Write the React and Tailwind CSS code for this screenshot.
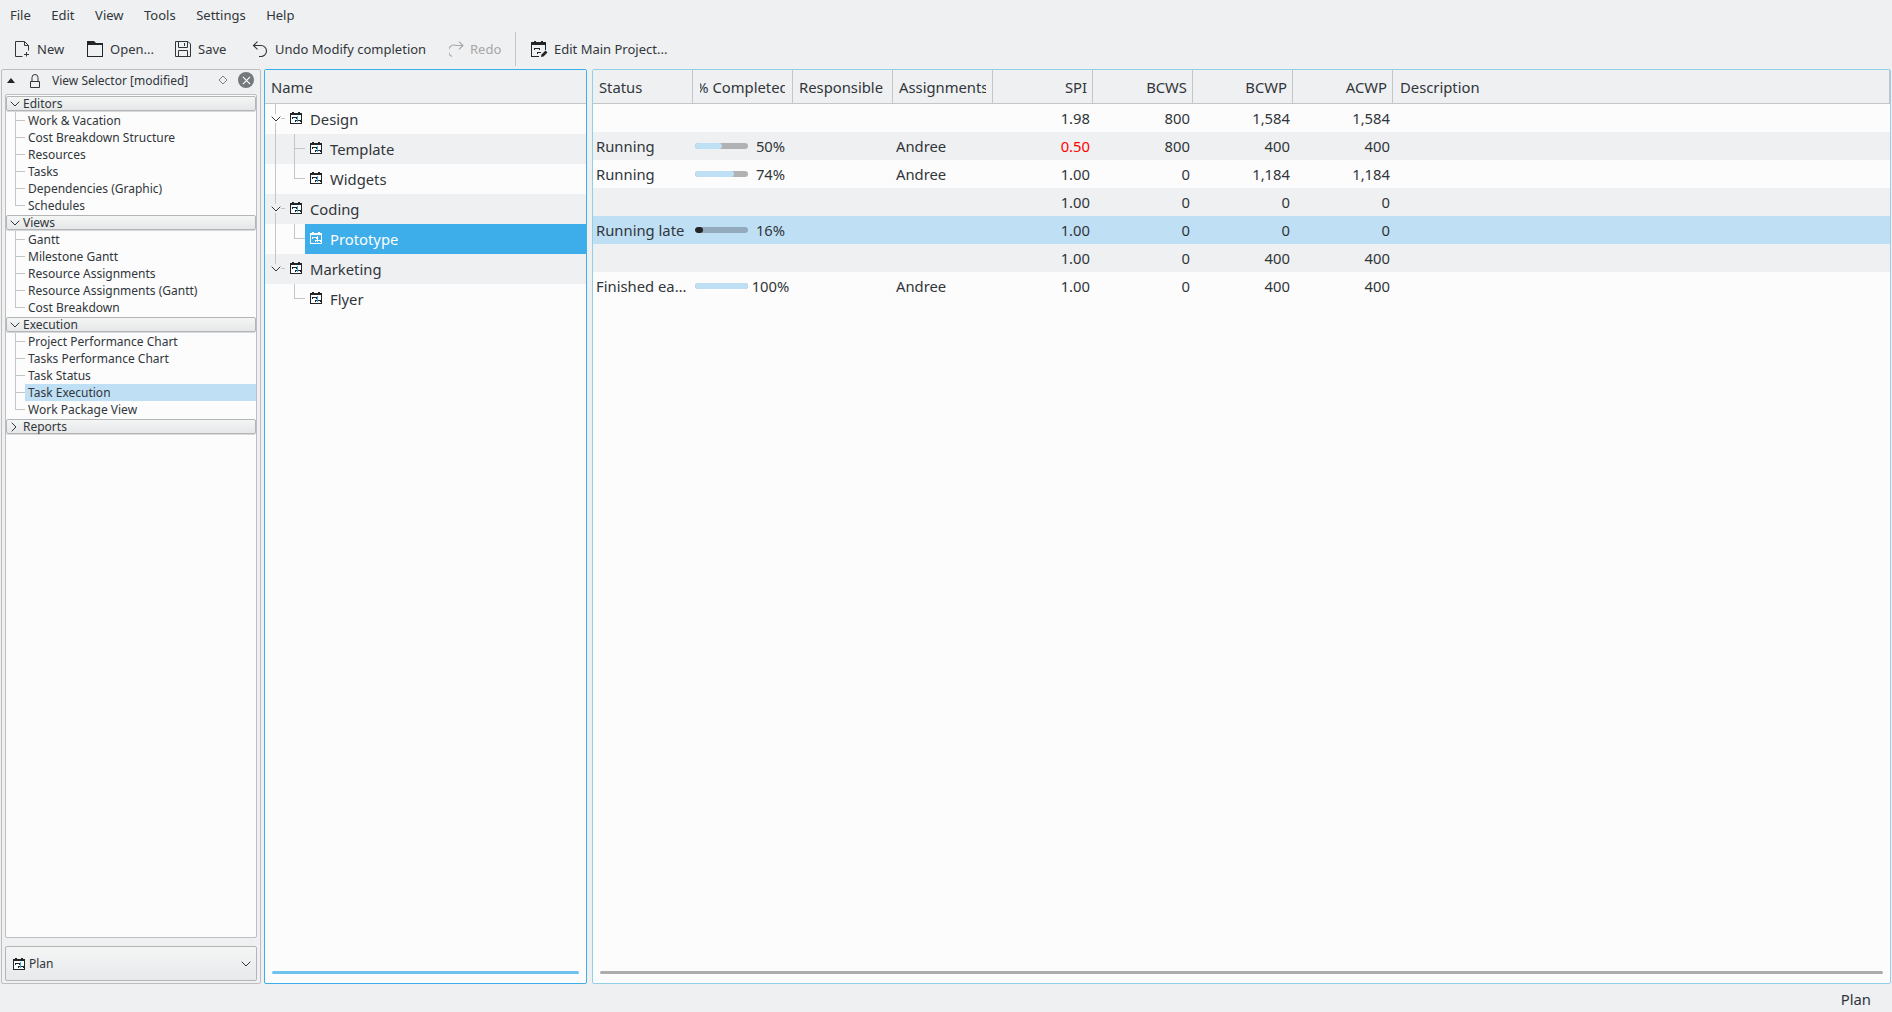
import React from "react";

const Chevron = ({ dir = "down", className = "" }) =>
  dir === "down" ? (
    <svg viewBox="0 0 10 6" className={className} fill="none" stroke="currentColor" strokeWidth="1">
      <path d="M0.7 0.7 L5 5 L9.3 0.7" />
    </svg>
  ) : (
    <svg viewBox="0 0 6 10" className={className} fill="none" stroke="currentColor" strokeWidth="1">
      <path d="M0.7 0.7 L5 5 L0.7 9.3" />
    </svg>
  );

const PlanIcon = ({ light = false, className = "" }) => {
  const c = light ? "#fcfcfc" : "#232629";
  return (
    <svg viewBox="0 0 12 12" className={className} fill="none" shapeRendering="crispEdges">
      <path d="M2 0h2v2H2zM8 0h2v2H8zM0 1h12v2H0z" fill={c} />
      <rect x="0.5" y="1.5" width="11" height="10" stroke={c} />
      {!light && <rect x="1" y="3" width="10" height="8" fill="#fcfcfc" />}
      <path d="M2 5.5h4M2 4.5v2M6 4.5v2M5 8.5h5M5 7.5v2M10 7.5v2" stroke={c} />
      <path d="M7.5 4v6" stroke={light ? "#fcfcfc" : "#3daee9"} />
    </svg>
  );
};

const ToolBtn = ({ w, icon, label, disabled, labelClass = "" }) => (
  <div className={`flex items-center gap-[4px] shrink-0 ${w} ${disabled ? "text-[#a5a7a9]" : "text-[#31363b]"}`}>
    <span className="w-[22px] h-[22px] flex items-center justify-center shrink-0">{icon}</span>
    <span className={`pt-[2px] ${labelClass}`}>{label}</span>
  </div>
);

const NewIcon = (
  <svg viewBox="0 0 16 16" className="w-[16px] h-[16px]" fill="none" stroke="#31363b" strokeWidth="1">
    <path d="M8.5 15.5 H1.5 V0.5 H10.5 L14.5 4.5 V9.5 M10.5 0.5 V4.5 H14.5" />
    <path d="M12.5 11 V15.5 M10 13.5 H15" />
  </svg>
);
const OpenIcon = (
  <svg viewBox="0 0 16 16" className="w-[16px] h-[16px]">
    <path d="M0 0 H7 L9 2 H16 V16 H0 Z" fill="#232629" />
    <rect x="1" y="4" width="14" height="11" fill="#eff0f1" />
  </svg>
);
const SaveIcon = (
  <svg viewBox="0 0 16 16" className="w-[16px] h-[16px]" fill="none" stroke="#31363b" strokeWidth="1">
    <path d="M0.5 0.5 H13 L15.5 3 V15.5 H0.5 Z" />
    <path d="M3.5 0.5 V6.5 H12.5 V0.5 M3.5 15.5 V9.5 H12.5 V15.5" />
    <path d="M9.5 2 V5" />
  </svg>
);
const UndoIcon = (
  <svg viewBox="0 0 16 16" className="w-[16px] h-[16px]" fill="none" stroke="#31363b" strokeWidth="1.1">
    <path d="M1.5 4.5 H9 A5.5 5.5 0 0 1 9 15.5 H7" />
    <path d="M5.5 0.7 L1.5 4.5 L5.5 8.3" />
  </svg>
);
const RedoIcon = (
  <svg viewBox="0 0 16 16" className="w-[16px] h-[16px]" fill="none" stroke="#a5a7a9" strokeWidth="1.1">
    <path d="M14 4.5 H8 A5.8 5.8 0 0 0 3 15.5" />
    <path d="M10 0.7 L14 4.5 L10 8.3" />
  </svg>
);
const EditIcon = (
  <svg viewBox="0 0 17 17" className="w-[17px] h-[17px]" fill="none" shapeRendering="crispEdges">
    <path d="M3 0h2v2H3zM10 0h2v2h-2zM0 1h15v3H0z" fill="#232629" />
    <path d="M8 15.5H0.5V1.5H14.5V9" stroke="#232629" />
    <path d="M3 7.5h5M3 6.5v2M8 6.5v2M6 11.5h4M6 10.5v2" stroke="#232629" />
    <path d="M10 16 L10.5 13.5 L14.5 9.5 L16.5 11.5 L12.5 15.5 Z" fill="#232629" shapeRendering="auto" />
  </svg>
);

const sections = [
  { t: "Editors", open: true, items: ["Work & Vacation", "Cost Breakdown Structure", "Resources", "Tasks", "Dependencies (Graphic)", "Schedules"] },
  { t: "Views", open: true, items: ["Gantt", "Milestone Gantt", "Resource Assignments", "Resource Assignments (Gantt)", "Cost Breakdown"] },
  { t: "Execution", open: true, items: ["Project Performance Chart", "Tasks Performance Chart", "Task Status", "Task Execution", "Work Package View"] },
  { t: "Reports", open: false, items: [] },
];

function SelectorTree() {
  return (
    <div className="flex-1 bg-[#fcfcfc] border border-[#bcbebf] rounded-[2px] text-[12px] leading-[17px] text-[#31363b]">
      {sections.map((s) => (
        <div key={s.t}>
          <div className="h-[15px] my-[1px] flex items-center border border-[#b4b5b6] rounded-[2px] bg-gradient-to-b from-[#f4f5f5] to-[#e6e7e8] shadow-[0_1px_0_#d8d9da]">
            <span className="w-[16px] pl-[3px] flex text-[#31363b] shrink-0">
              {s.open ? (
                <Chevron className="w-[10px] h-[6px]" />
              ) : (
                <Chevron dir="right" className="ml-[1px] w-[6px] h-[10px]" />
              )}
            </span>
            <span>{s.t}</span>
          </div>
          {s.items.map((it, i) => {
            const last = i === s.items.length - 1;
            const sel = it === "Task Execution";
            return (
              <div key={it} className="flex h-[17px] items-center">
                <span className="relative w-[10px] h-[17px] ml-[9px] shrink-0">
                  <span className={`absolute left-0 top-0 w-px bg-[#c4c5c6] ${last ? "h-[9px]" : "h-[17px]"}`} />
                  <span className="absolute left-0 top-[8px] w-[10px] h-px bg-[#c4c5c6]" />
                </span>
                <span className={`flex-1 h-[17px] pl-[3px] ${sel ? "bg-[#bfdff5]" : ""}`}>{it}</span>
              </div>
            );
          })}
        </div>
      ))}
    </div>
  );
}

const treeRows = [
  { t: "Design", top: true, bg: "bg-[#fcfcfc]", through: true },
  { t: "Template", bg: "bg-[#eff0f1]", through: true, more: true },
  { t: "Widgets", bg: "bg-[#fcfcfc]", through: true },
  { t: "Coding", top: true, bg: "bg-[#eff0f1]", through: true },
  { t: "Prototype", bg: "bg-[#fcfcfc]", through: true, sel: true },
  { t: "Marketing", top: true, bg: "bg-[#eff0f1]", through: false },
  { t: "Flyer", bg: "bg-[#fcfcfc]", through: false },
];

function TreeRow({ r }) {
  return (
    <div className={`relative h-[30px] flex items-center text-[14.8px] text-[#31363b] ${r.bg}`}>
      {r.top ? (
        <>
          <span className={`absolute left-[10px] top-0 w-px bg-[#c4c5c6] ${r.through ? "h-[30px]" : "h-[10px]"}`} />
          <span className="absolute left-[15px] top-[14px] w-[5px] h-px bg-[#c4c5c6]" />
          <span className={`absolute left-[5px] top-[10px] w-[11px] h-[9px] flex items-center justify-center ${r.bg}`}>
            <Chevron className="w-[10px] h-[6px] text-[#31363b]" />
          </span>
          <PlanIcon className="ml-[25px] w-[12px] h-[12px] shrink-0 -mt-[2px]" />
          <span className="ml-[8px]">{r.t}</span>
        </>
      ) : (
        <>
          {r.through && <span className="absolute left-[10px] top-0 w-px h-[30px] bg-[#c4c5c6]" />}
          <span className={`absolute left-[29px] top-0 w-px bg-[#c4c5c6] ${r.more ? "h-[30px]" : "h-[15px]"}`} />
          <span className="absolute left-[29px] top-[14px] w-[11px] h-px bg-[#c4c5c6]" />
          <div className={`ml-[40px] flex-1 h-[30px] flex items-center ${r.sel ? "bg-[#3daee9] text-[#fcfcfc]" : ""}`}>
            <PlanIcon light={r.sel} className="ml-[5px] w-[12px] h-[12px] shrink-0 -mt-[2px]" />
            <span className="ml-[8px]">{r.t}</span>
          </div>
        </>
      )}
    </div>
  );
}

const cols = ["SPI", "BCWS", "BCWP", "ACWP"];
const rows = [
  { spi: "1.98", bcws: "800", bcwp: "1,584", acwp: "1,584" },
  { status: "Running", pct: 50, who: "Andree", spi: "0.50", red: true, bcws: "800", bcwp: "400", acwp: "400" },
  { status: "Running", pct: 74, who: "Andree", spi: "1.00", bcws: "0", bcwp: "1,184", acwp: "1,184" },
  { spi: "1.00", bcws: "0", bcwp: "0", acwp: "0" },
  { status: "Running late", pct: 16, spi: "1.00", bcws: "0", bcwp: "0", acwp: "0", sel: true },
  { spi: "1.00", bcws: "0", bcwp: "400", acwp: "400" },
  { status: "Finished ea…", pct: 100, who: "Andree", spi: "1.00", bcws: "0", bcwp: "400", acwp: "400" },
];

function Progress({ pct, sel }) {
  return (
    <div className="w-[100px] shrink-0 flex items-center h-full">
      <div className={`ml-[2px] w-[53px] h-[6px] rounded-[3px] overflow-hidden -mt-[1px] shrink-0 ${sel ? "bg-[#93a9bc]" : "bg-[#b1b2b3]"}`}>
        <div className={`h-full rounded-[3px] ${sel ? "bg-[#232629]" : "bg-[#bfdff5]"}`} style={{ width: `${pct}%` }} />
      </div>
      <span className="w-[46px] text-center whitespace-nowrap">{pct}%</span>
    </div>
  );
}

const Head = ({ children, className = "" }) => (
  <div className={`w-[100px] shrink-0 h-full border-r border-[#c5c6c7] pt-[1px] flex items-center overflow-hidden ${className}`}>
    {children}
  </div>
);

function Table() {
  return (
    <div className="flex-1 min-w-0 flex flex-col bg-[#fcfcfc] border border-[#94cfea] rounded-[2px]">
      <div className="h-[34px] shrink-0 flex bg-[#eff0f1] border-b border-[#c5c6c7] text-[14.8px] text-[#31363b]">
        <Head className="pl-[6px]">Status</Head>
        <Head className="justify-center whitespace-nowrap">
          <div className="w-[85px] overflow-hidden flex justify-center">
            <span className="shrink-0">% Completed</span>
          </div>
        </Head>
        <Head className="pl-[6px] whitespace-nowrap">Responsible</Head>
        <Head className="pl-[6px] whitespace-nowrap"><span className="block w-[87px] shrink-0 overflow-hidden">Assignments</span></Head>
        {cols.map((c) => (
          <Head key={c} className="justify-end pr-[5px]">{c}</Head>
        ))}
        <div className="flex-1 pl-[7px] pt-[1px] flex items-center border-r border-[#c5c6c7]">Description</div>
      </div>
      <div className="flex-1 text-[14.8px] text-[#31363b]">
        {rows.map((r, i) => (
          <div key={i} className={`h-[28px] flex items-center ${r.sel ? "bg-[#bfdff5]" : i % 2 ? "bg-[#eff0f1]" : "bg-[#fcfcfc]"}`}>
            <div className="w-[100px] shrink-0 pl-[3px] whitespace-nowrap">{r.status}</div>
            {r.pct ? <Progress pct={r.pct} sel={r.sel} /> : <div className="w-[100px] shrink-0" />}
            <div className="w-[100px] shrink-0" />
            <div className="w-[100px] shrink-0 pl-[3px]">{r.who}</div>
            <div className={`w-[100px] shrink-0 pr-[3px] text-right ${r.red ? "text-[#ff0000]" : ""}`}>{r.spi}</div>
            <div className="w-[100px] shrink-0 pr-[3px] text-right">{r.bcws}</div>
            <div className="w-[100px] shrink-0 pr-[3px] text-right">{r.bcwp}</div>
            <div className="w-[100px] shrink-0 pr-[3px] text-right">{r.acwp}</div>
          </div>
        ))}
      </div>
      <div className="h-[3px] shrink-0 mx-[7px] mb-[9px] rounded-[2px] bg-[#acacac]" />
    </div>
  );
}

export default function App() {
  return (
    <div className="w-screen h-screen overflow-hidden flex flex-col bg-[#eff0f1] text-[#31363b] font-['Noto_Sans',sans-serif]">
      <div className="h-[32px] shrink-0 flex items-center pl-[10px] gap-[20.5px] text-[13px]">
        {["File", "Edit", "View", "Tools", "Settings", "Help"].map((m) => (
          <span key={m}>{m}</span>
        ))}
      </div>
      <div className="h-[34px] shrink-0 flex items-center pl-[11px] text-[13px]">
        <ToolBtn w="w-[73px]" icon={NewIcon} label="New" />
        <ToolBtn w="w-[88px]" icon={OpenIcon} label="Open..." />
        <ToolBtn w="w-[77px]" icon={SaveIcon} label="Save" />
        <ToolBtn w="w-[197px]" icon={UndoIcon} label="Undo Modify completion" />
        <ToolBtn w="w-[69px]" icon={RedoIcon} label="Redo" labelClass="-ml-[2px]" disabled />
        <div className="w-px h-[34px] bg-[#c5c6c7] shrink-0" />
        <div className="ml-[12px]">
          <ToolBtn w="w-auto" icon={EditIcon} label="Edit Main Project..." />
        </div>
      </div>
      <div className="h-[3px] shrink-0" />
      <div className="flex-1 min-h-0 flex pl-[1px] pr-[1px]">
        <div className="w-[260px] shrink-0 flex flex-col border border-[#bcbebf] rounded-[2px] px-[3px] pb-[1px]">
          <div className="h-[24px] pb-[3px] shrink-0 flex items-center text-[12px]">
            <svg viewBox="0 0 8 5" className="w-[8px] h-[5px] ml-[2px] shrink-0"><path d="M4 0 L8 5 H0 Z" fill="#232629" /></svg>
            <svg viewBox="0 0 12 14" className="w-[12px] h-[14px] ml-[14px] shrink-0" fill="none" stroke="#31363b">
              <path d="M3 7 V3.5 A3 3 0 0 1 9 3.5 V7 M1.5 7.5 H10.5 V13.5 H1.5 Z" />
            </svg>
            <span className="ml-[11px]">View Selector [modified]</span>
            <svg viewBox="0 0 10 10" className="w-[10px] h-[10px] ml-[30px] -mt-[1px] shrink-0" fill="none" stroke="#7f8285"><path d="M5 1 L9 5 L5 9 L1 5 Z" /></svg>
            <span className="ml-[10px] -mt-[1px] w-[16px] h-[16px] rounded-full bg-[#75797d] flex items-center justify-center shrink-0">
              <svg viewBox="0 0 10 10" className="w-[9px] h-[9px]" stroke="#fcfcfc" strokeWidth="1.3"><path d="M1 1 L9 9 M9 1 L1 9" /></svg>
            </span>
          </div>
          <SelectorTree />
          <div className="h-[35px] mt-[8px] mb-[1px] shrink-0 flex items-center border border-[#b4b5b6] rounded-[2px] bg-gradient-to-b from-[#f4f5f5] to-[#e8e9ea] text-[12px]">
            <PlanIcon className="ml-[7px] w-[12px] h-[12px] shrink-0" />
            <span className="ml-[4px]">Plan</span>
            <Chevron className="ml-auto mr-[5px] w-[10px] h-[6px]" />
          </div>
        </div>
        <div className="ml-[3px] w-[323px] shrink-0 flex flex-col bg-[#fcfcfc] border border-[#3daee9] rounded-[2px]">
          <div className="h-[34px] shrink-0 flex items-center pl-[6px] pt-[1px] bg-[#eff0f1] border-b border-[#c5c6c7] text-[14.8px]">Name</div>
          <div className="flex-1">
            {treeRows.map((r) => (
              <TreeRow key={r.t} r={r} />
            ))}
          </div>
          <div className="h-[3px] shrink-0 mx-[7px] mb-[9px] rounded-[2px] bg-[#6ec2ee]" />
        </div>
        <div className="ml-[5px] flex-1 min-w-0 flex">
          <Table />
        </div>
      </div>
      <div className="h-[28px] pt-[3px] shrink-0 flex items-center justify-end pr-[21px] text-[14.8px]">Plan</div>
    </div>
  );
}
